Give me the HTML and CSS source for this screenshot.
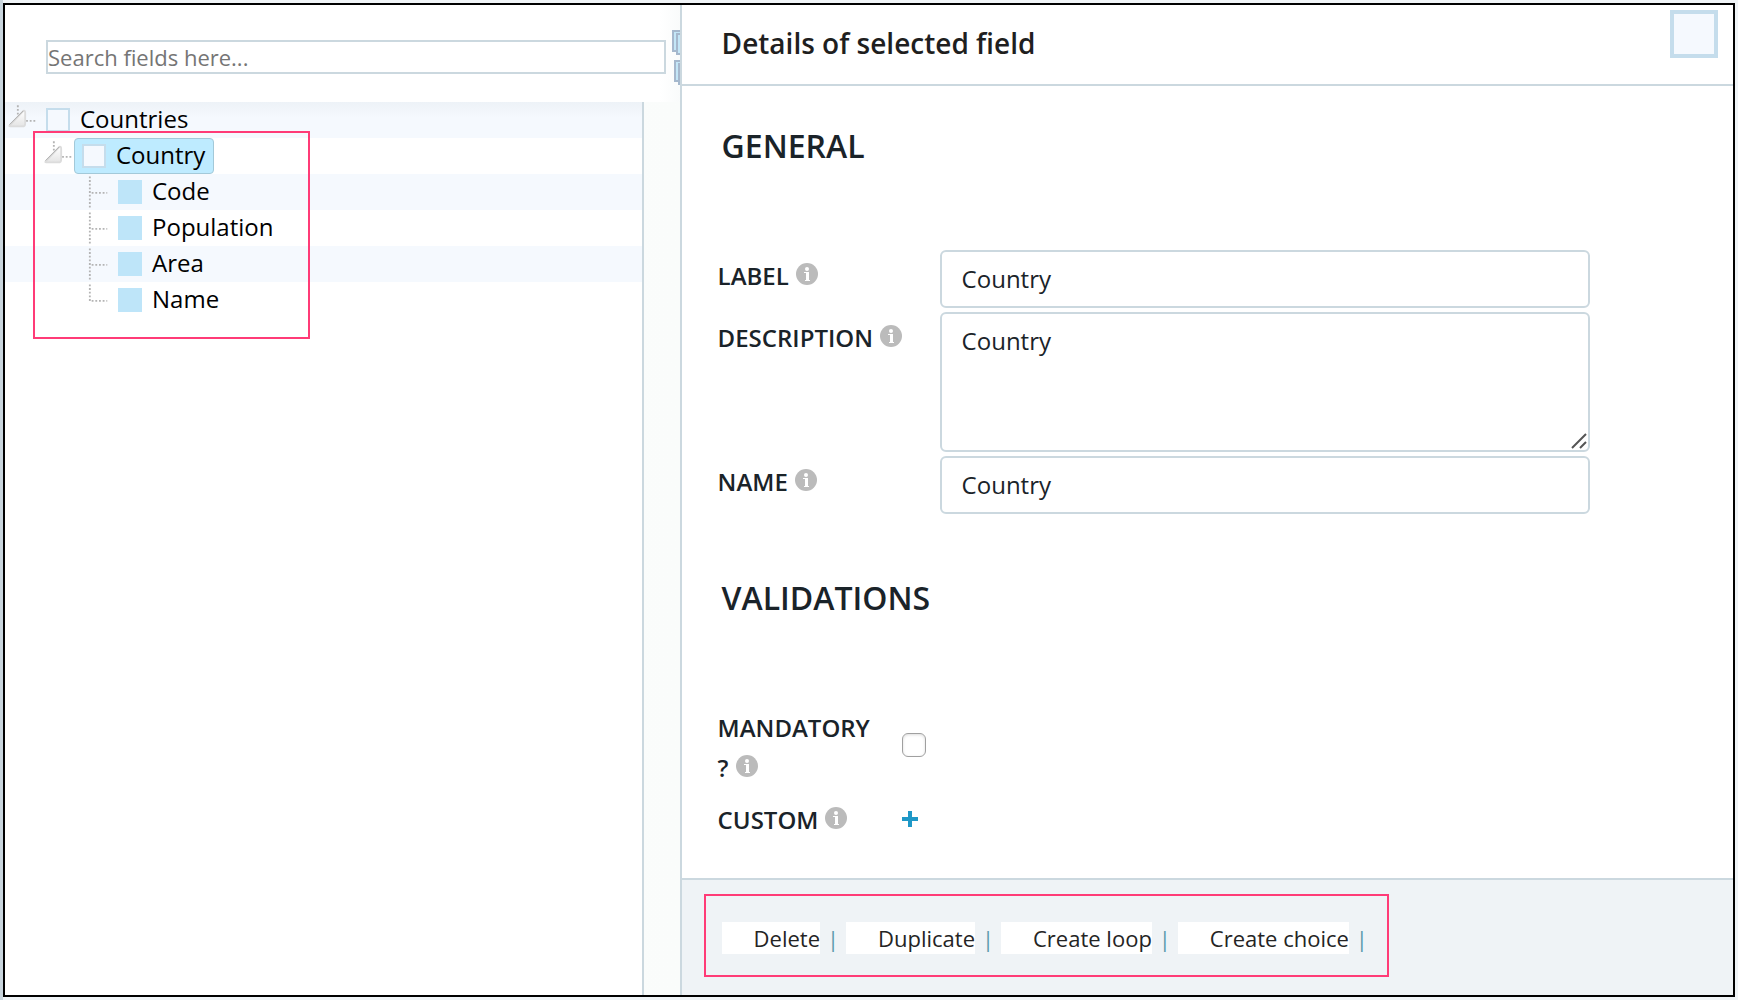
FILE: index.html
```html
<!DOCTYPE html>
<html lang="en">
<head>
<meta charset="utf-8">
<title>Details of selected field</title>
<meta name="viewport" content="width=device-width, initial-scale=1">
<link rel="stylesheet" href="styles.css">
</head>
<body>
<svg class="defs" aria-hidden="true">
  <defs>
    <linearGradient id="tri" x1="0" y1="0" x2="0" y2="1">
      <stop offset="0" stop-color="#fff"/><stop offset="1" stop-color="#e4e4e4"/>
    </linearGradient>
    <symbol id="toggle" viewBox="0 0 36 36">
      <path d="M14 2v10M23 19h10" stroke="#b4b4b4" stroke-width="2" stroke-dasharray="2 2" fill="none"/>
      <path d="M5 24L20 8Q22 7 22 10V22Q22 25 19 25H7Q4 25 5 24Z" fill="url(#tri)" stroke="#dcdcdc" stroke-width="2" stroke-linejoin="round"/>
      <path d="M5 23L20 8" stroke="#aaa" fill="none"/>
    </symbol>
    <symbol id="branch" viewBox="0 0 36 36">
      <path d="M14 1v35M16 19h17" stroke="#b4b4b4" stroke-width="2" stroke-dasharray="2 2" fill="none"/>
    </symbol>
    <symbol id="branch-last" viewBox="0 0 36 36">
      <path d="M14 1v19M16 19h17" stroke="#b4b4b4" stroke-width="2" stroke-dasharray="2 2" fill="none"/>
    </symbol>
    <symbol id="info" viewBox="0 0 22 22">
      <circle cx="11" cy="11" r="11" fill="#bbb"/>
      <circle cx="11" cy="6" r="2" fill="#fff"/>
      <path d="M8 9h5v8h1v1H9v-1h1v-7H8z" fill="#fff"/>
    </symbol>
  </defs>
</svg>
<main class="frame">
  <section class="fields">
    <div class="search">
      <input class="search-input" type="text" placeholder="Search fields here..." aria-label="Search fields">
      <div class="search-tools">
        <svg width="32" height="58" viewBox="0 0 32 58">
          <g fill="#c3e6f7" stroke="#a5b8cd" stroke-width="2">
            <path d="M2 2h20v20H2z"/><path d="M6 5h20v20H6z"/>
            <path d="M4 32h20v20H4z"/><path d="M8 35h20v20H8z"/>
          </g>
        </svg>
      </div>
    </div>
    <div class="tree-area">
      <ul class="tree">
        <li>
          <div class="row level-0"><svg class="joint"><use href="#toggle"/></svg><a class="node" href="#countries"><span class="box"></span><span class="name">Countries</span></a></div>
          <ul>
            <li>
              <div class="row level-1"><svg class="joint"><use href="#toggle"/></svg><a class="node selected" href="#country"><span class="box"></span><span class="name">Country</span></a></div>
              <ul>
                <li class="row level-2"><svg class="joint"><use href="#branch"/></svg><a class="node" href="#code"><span class="box leaf"></span><span class="name">Code</span></a></li>
                <li class="row level-2"><svg class="joint"><use href="#branch"/></svg><a class="node" href="#population"><span class="box leaf"></span><span class="name">Population</span></a></li>
                <li class="row level-2"><svg class="joint"><use href="#branch"/></svg><a class="node" href="#area"><span class="box leaf"></span><span class="name">Area</span></a></li>
                <li class="row level-2"><svg class="joint"><use href="#branch-last"/></svg><a class="node" href="#name"><span class="box leaf"></span><span class="name">Name</span></a></li>
              </ul>
            </li>
          </ul>
        </li>
      </ul>
      <div class="tree-highlight"></div>
    </div>
  </section>

  <section class="details">
    <header class="details-header">
      <h1>Details of selected field</h1>
      <button class="close" type="button" aria-label="Close"></button>
    </header>
    <form class="details-body">
      <h2>GENERAL</h2>
      <div class="group general">
        <div class="label-cell"><label for="f-label">LABEL</label><svg class="info"><use href="#info"/></svg></div>
        <input class="control" id="f-label" type="text" value="Country">
        <div class="label-cell"><label for="f-description">DESCRIPTION</label><svg class="info"><use href="#info"/></svg></div>
        <div class="area-wrap">
          <textarea class="control area" id="f-description">Country</textarea>
          <svg class="grip" viewBox="0 0 16 16"><path d="M1 15L15 1M9 15L15 9" stroke="#555" stroke-width="2" fill="none"/></svg>
        </div>
        <div class="label-cell"><label for="f-name">NAME</label><svg class="info"><use href="#info"/></svg></div>
        <input class="control" id="f-name" type="text" value="Country">
      </div>
      <h2>VALIDATIONS</h2>
      <div class="group validations">
        <div class="label-cell wrap"><label for="f-mandatory">MANDATORY ?</label><svg class="info"><use href="#info"/></svg></div>
        <input class="check" id="f-mandatory" type="checkbox">
        <div class="label-cell"><span>CUSTOM</span><svg class="info"><use href="#info"/></svg></div>
        <button class="add" type="button" aria-label="Add custom validation"><svg width="16" height="16" viewBox="0 0 16 16"><path d="M6 0h4v6h6v4h-6v6H6v-6H0V6h6z" fill="#1f98c7"/></svg></button>
      </div>
    </form>
    <footer class="details-footer">
      <div class="actions">
        <button type="button">Delete</button><span>|</span>
        <button type="button">Duplicate</button><span>|</span>
        <button type="button">Create loop</button><span>|</span>
        <button type="button">Create choice</button><span>|</span>
      </div>
    </footer>
  </section>
</main>
</body>
</html>
```
FILE: styles.css
```css
* { box-sizing: border-box; }

body {
  margin: 0;
  padding: 3px;
  min-height: 100vh;
  display: flex;
  background: linear-gradient(90deg, #c9d5dd 3px, #f0f4f7 3px);
  font-family: "Open Sans", "Noto Sans", sans-serif;
  font-size: 24px;
  color: #1a2329;
}

button, input, textarea { font: inherit; color: inherit; margin: 0; }

.defs { position: absolute; width: 0; height: 0; }

.frame {
  flex: 1;
  display: grid;
  grid-template-columns: 675fr 1054fr;
  border: 2px solid #000;
  background: #fff;
}

/* Field tree */
.fields {
  display: flex;
  flex-direction: column;
  min-width: 0;
  overflow: hidden;
}

.search {
  display: flex;
  align-items: flex-start;
  gap: 5px;
  height: 97px;
  padding: 24px 0 0 41px;
  background: linear-gradient(270deg, #f9fbfb, #fff 20px);
}

.search-input {
  flex: 1;
  min-width: 0;
  height: 34px;
  margin-top: 11px;
  padding: 0;
  border: 2px solid #cbd8df;
  background: #fff;
  font-size: 22px;
}

.search-input::placeholder { color: #757575; opacity: 1; }

.search-tools { width: 9px; overflow: hidden; }
.search-tools svg { display: block; }

.tree-area {
  position: relative;
  flex: 1;
  padding-right: 36px;
  background: linear-gradient(90deg, #f8faf9, #fdfefe 18px, #fafcfb);
}

.tree, .tree ul { margin: 0; padding: 0; list-style: none; }

.tree {
  height: 100%;
  border-right: 2px solid #cbd8df;
  background: #fff;
}

.row {
  display: flex;
  height: 36px;
  background: #f5f9fe;
}

.level-0 { background: linear-gradient(#edf2f7, #f5f9fe 16px); }
.level-1, .level-2:nth-child(even) { background: #fff; }
.level-1 { padding-left: 36px; }
.level-2 { padding-left: 72px; }

.joint { width: 33px; height: 36px; flex: none; overflow: hidden; }
.joint use { width: 36px; height: 36px; }

.node {
  display: flex;
  align-items: center;
  gap: 10px;
  padding: 0 8px 0 7px;
  border: 1px solid transparent;
  border-radius: 4px;
  color: #000;
  text-decoration: none;
}

.node.selected { background: #beebff; border-color: #a3c9d9; }

.name { padding-bottom: 3px; line-height: 31px; }

.box {
  width: 24px;
  height: 24px;
  border: 2px solid #c5ddec;
  background: #f5f9fe;
}

.box.leaf { border: 0; background: #bee5f9; }

.tree-highlight {
  position: absolute;
  left: 28px;
  top: 29px;
  width: 277px;
  height: 208px;
  border: 2px solid #ff3b77;
  pointer-events: none;
}

/* Details panel */
.details {
  display: flex;
  flex-direction: column;
  min-width: 0;
  border-left: 2px solid #cbd8df;
}

.details-header {
  display: flex;
  justify-content: space-between;
  align-items: flex-start;
  height: 81px;
  padding: 5px 15px 0 40px;
  border-bottom: 2px solid #cbd8df;
}

h1, h2 { margin: 0; font-weight: 600; }
h1 { font-size: 28px; line-height: 66px; color: #1f1f1f; }
h2 { padding-left: 4px; font-size: 32px; line-height: 48px; }

.close {
  width: 48px;
  height: 48px;
  padding: 0;
  border: 4px solid #c5ddec;
  background: #f5f9fe;
}

.details-body {
  flex: 1;
  padding: 36px 36px 24px;
}

.group { display: grid; align-items: start; }

.general {
  grid-template-columns: 222px minmax(0, 650px);
  row-gap: 4px;
  margin: 80px 0 60px;
}

.validations {
  grid-template-columns: 184px 1fr;
  row-gap: 12px;
  margin-top: 86px;
}

.label-cell {
  font-weight: 600;
  line-height: 40px;
}

.general .label-cell { padding-top: 6px; }
.wrap { width: 160px; }

.info { width: 22px; height: 22px; margin-left: 7px; }

.control {
  display: block;
  width: 100%;
  height: 58px;
  padding: 0 20px 2px;
  border: 2px solid #cbd8df;
  border-radius: 6px;
  background: #fff;
}

.area-wrap { position: relative; }
.area { height: 140px; padding: 10px 20px; resize: none; }
.grip { position: absolute; right: 3px; bottom: 3px; width: 16px; height: 16px; }

.check {
  appearance: none;
  width: 24px;
  height: 24px;
  margin-top: 25px;
  border: 1px solid #a0a0a0;
  border-radius: 6px;
  background: #fff;
  box-shadow: inset 0 1px 3px #ddd;
}

.add {
  width: 16px;
  height: 16px;
  margin-top: 11px;
  padding: 0;
  border: 0;
  background: none;
}

.add svg { display: block; }

.details-footer {
  padding: 14px 22px 18px;
  border-top: 2px solid #cbd8df;
  background: #eff3f6;
}

.actions {
  display: flex;
  align-items: center;
  width: fit-content;
  height: 83px;
  padding: 4px 12px 0 16px;
  border: 2px solid #ff3b77;
  font-size: 22px;
}

.actions button {
  height: 32px;
  padding: 0 0 0 32px;
  border: 0;
  background: #fff;
  color: #242424;
  line-height: 32px;
}

.actions span { width: 26px; text-align: center; color: #5b9bad; }
```
